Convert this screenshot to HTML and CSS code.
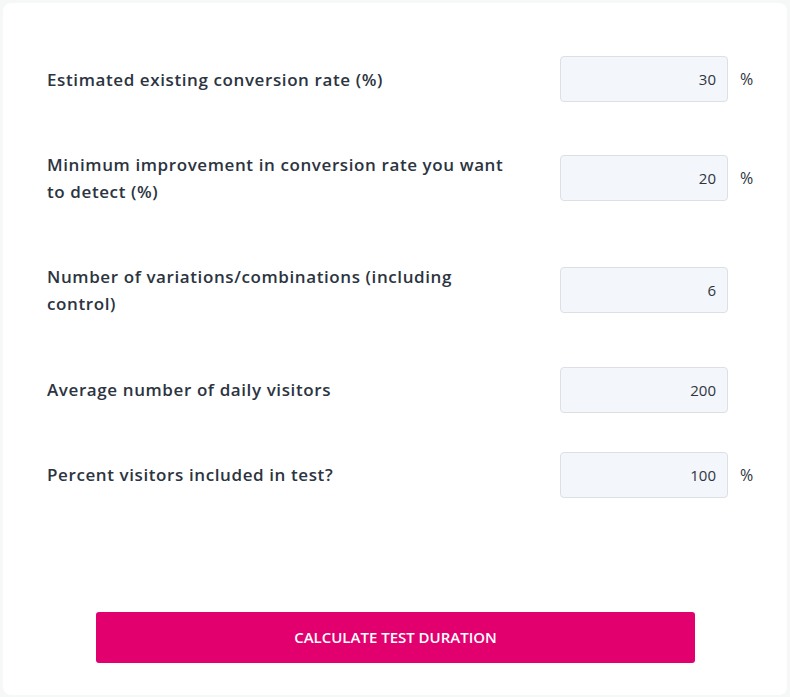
FILE: index.html
```html
<!DOCTYPE html>
<html lang="en">
<head>
<meta charset="utf-8">
<title>Test duration calculator</title>
<link rel="stylesheet" href="styles.css">
</head>
<body>
<div class="card">
  <form class="calc">
    <div class="row row-1">
      <label class="label" for="f1">Estimated existing conversion rate (%)</label>
      <div class="field"><input id="f1" class="input" type="text" value="30"><span class="unit">%</span></div>
    </div>
    <div class="row row-2">
      <label class="label" for="f2">Minimum improvement in conversion rate you want to detect (%)</label>
      <div class="field"><input id="f2" class="input" type="text" value="20"><span class="unit">%</span></div>
    </div>
    <div class="row row-3">
      <label class="label" for="f3">Number of variations/combinations (including control)</label>
      <div class="field"><input id="f3" class="input" type="text" value="6"><span class="unit"></span></div>
    </div>
    <div class="row row-4">
      <label class="label" for="f4">Average number of daily visitors</label>
      <div class="field"><input id="f4" class="input" type="text" value="200"><span class="unit"></span></div>
    </div>
    <div class="row row-5">
      <label class="label" for="f5">Percent visitors included in test?</label>
      <div class="field"><input id="f5" class="input" type="text" value="100"><span class="unit">%</span></div>
    </div>
    <div class="actions">
      <button type="button" class="btn">CALCULATE TEST DURATION</button>
    </div>
  </form>
</div>
</body>
</html>
```

FILE: styles.css
```css
* { box-sizing: border-box; }
html, body { margin: 0; padding: 0; }
body {
  background: #f6f7f7;
  font-family: "Open Sans", "Noto Sans", sans-serif;
  color: #2c3441;
  padding: 3px 3px 2px 3px;
}
.card {
  background: #fff;
  border-radius: 8px;
  width: 784px;
  height: 692px;
  padding: 0 0 0 44px;
}
.calc { padding-top: 53px; }
.row {
  display: flex;
  align-items: center;
  width: 711px;
}
.row-2 { margin-top: 49px; }
.row-3 { margin-top: 58px; }
.row-4 { margin-top: 49.5px; }
.row-5 { margin-top: 39px; }
.label {
  width: 513px;
  padding-right: 40px;
  font-size: 17px;
  font-weight: 600;
  line-height: 27px;
  letter-spacing: 0.6px;
}
.field {
  display: flex;
  align-items: center;
}
.input {
  width: 168px;
  height: 46px;
  background: #f3f6fa;
  border: 1px solid #dcdfe4;
  border-radius: 4px;
  text-align: right;
  padding: 0 11px 0 0;
  font-family: "Open Sans", "Noto Sans", sans-serif;
  font-size: 15px;
  font-weight: 500;
  color: #2f3540;
  outline: none;
}
.unit {
  width: 30px;
  padding-left: 12px;
  font-size: 16px;
  padding-bottom: 0;
}
.actions {
  margin-top: 114px;
  padding-left: 49px;
}
.btn {
  width: 599px;
  height: 51px;
  background: #e2006f;
  border: none;
  border-radius: 3px;
  color: #fff;
  font-family: "Open Sans", "Noto Sans", sans-serif;
  font-size: 15px;
  font-weight: 600;
  letter-spacing: 0;
  cursor: pointer;
}
```
